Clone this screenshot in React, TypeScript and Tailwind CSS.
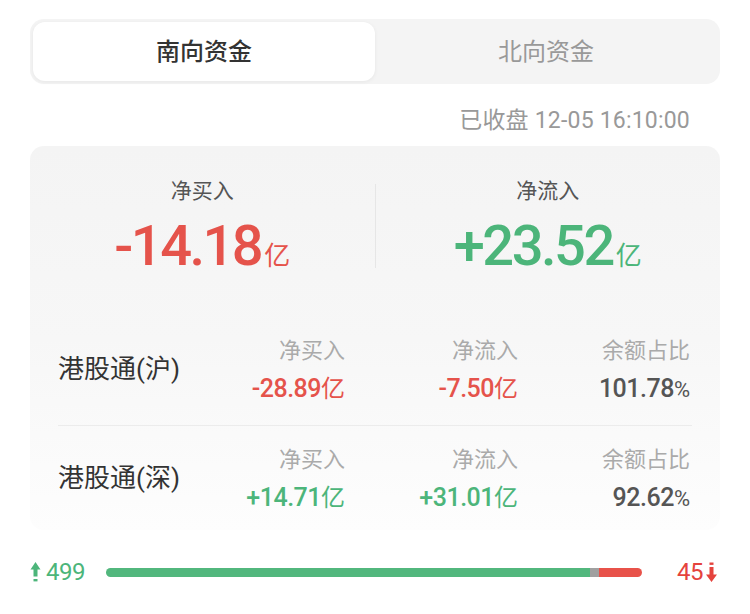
import React, { useState } from 'react';

const FONT = "font-['Roboto','Noto_Sans_CJK_SC',sans-serif]";

type Row = {
  name: string;
  buy: string;
  flow: string;
  ratio: string;
  up: boolean;
};

const rows: Row[] = [
  { name: '港股通(沪)', buy: '-28.89', flow: '-7.50', ratio: '101.78', up: false },
  { name: '港股通(深)', buy: '+14.71', flow: '+31.01', ratio: '92.62', up: true },
];

const UpArrow = () => (
  <svg width="11" height="22" viewBox="0 0 11 22" className="shrink-0">
    <path d="M5.5 1 L10.5 8.5 H7.5 V15.5 H3.5 V8.5 H0.5 Z" fill="#4cb57a" />
    <rect x="3.5" y="18" width="4" height="2.4" fill="#4cb57a" />
  </svg>
);

const DownArrow = () => (
  <svg width="13" height="22" viewBox="0 0 13 22" className="shrink-0">
    <rect x="4.5" y="1.5" width="4" height="2.4" fill="#e5433d" />
    <path d="M6.5 21 L12 13.5 H8.5 V6 H4.5 V13.5 H1 Z" fill="#e5433d" />
  </svg>
);

const App = () => {
  const [tab, setTab] = useState(0);

  return (
    <div className={`w-[750px] h-[614px] bg-white ${FONT} overflow-hidden`}>
      {/* Tabs */}
      <div className="mx-[30px] mt-[19px] h-[65px] rounded-[14px] bg-[#f4f4f4] p-[3px] flex">
        {['南向资金', '北向资金'].map((t, i) => (
          <button
            key={t}
            onClick={() => setTab(i)}
            className={`flex-1 rounded-[12px] text-[24px] flex items-center justify-center ${
              tab === i
                ? 'bg-white text-[#333] font-medium shadow-[0_1px_4px_rgba(0,0,0,0.06)]'
                : 'text-[#999]'
            }`}
          >
            {t}
          </button>
        ))}
      </div>

      {/* Timestamp */}
      <div className="h-[62px] pt-[11px] pr-[30px] mr-[30px] flex items-center justify-end text-[23px] tracking-[0.2px] text-[#999] leading-none">
        已收盘 12-05 16:10:00
      </div>

      {/* Card */}
      <div className="mx-[30px] h-[384px] rounded-[14px] bg-gradient-to-b from-[#f4f4f4] via-[#f7f7f7] to-[#fdfdfd]">
        {/* Summary */}
        <div className="h-[167px] flex items-start pt-[32px]">
          <div className="flex-1 flex flex-col items-center">
            <div className="text-[21px] text-[#555] leading-none h-[26px] flex items-center">净买入</div>
            <div className="mt-[14px] flex items-baseline text-[#e5534b] leading-none">
              <span className="text-[56px] font-medium tracking-[-2.5px]">-14.18</span>
              <span className="text-[26px] ml-[3px]">亿</span>
            </div>
          </div>
          <div className="w-px h-[84px] mt-[6px] bg-[#e6e6e6]" />
          <div className="flex-1 flex flex-col items-center">
            <div className="text-[21px] text-[#555] leading-none h-[26px] flex items-center">净流入</div>
            <div className="mt-[14px] flex items-baseline text-[#4cb57a] leading-none">
              <span className="text-[56px] font-medium tracking-[-2.5px]">+23.52</span>
              <span className="text-[26px] ml-[3px]">亿</span>
            </div>
          </div>
        </div>

        {/* Rows */}
        <div className="px-[28px]">
          {rows.map((r, idx) => {
            const color = r.up ? 'text-[#4cb57a]' : 'text-[#e5534b]';
            return (
              <div
                key={r.name}
                className={`grid grid-cols-[1fr_150px_173px_172px] items-center ${
                  idx === 0 ? 'border-b border-[#ececec] h-[113px]' : 'h-[104px]'
                }`}
              >
                <div className="text-[26px] text-[#333] leading-none">{r.name}</div>
                {[
                  { h: '净买入', v: r.buy, c: color, u: '亿' },
                  { h: '净流入', v: r.flow, c: color, u: '亿' },
                  { h: '余额占比', v: r.ratio, c: 'text-[#555]', u: '%' },
                ].map((col) => (
                  <div key={col.h} className="flex flex-col items-end pr-[2px]">
                    <div className="text-[22px] text-[#aaa] leading-none h-[26px] flex items-center">{col.h}</div>
                    <div className={`mt-[12px] flex items-baseline leading-none ${col.c}`}>
                      <span className="text-[25px] font-medium tracking-[-0.5px]">{col.v}</span>
                      <span className={col.u === '%' ? 'text-[22px]' : 'text-[24px]'}>{col.u}</span>
                    </div>
                  </div>
                ))}
              </div>
            );
          })}
        </div>
      </div>

      {/* Rise / fall bar */}
      <div className="mt-[27px] h-[30px] px-[30px] flex items-center">
        <UpArrow />
        <span className="ml-[5px] text-[24px] tracking-[-0.5px] text-[#4cb57a] leading-none">499</span>
        <div className="ml-[21px] flex-1 h-[9px] rounded-full overflow-hidden flex">
          <div className="bg-[#52b77d]" style={{ width: `${(489 / 542) * 100}%` }} />
          <div className="bg-[#a0a0a0]" style={{ width: `${(10 / 542) * 100}%` }} />
          <div className="flex-1 bg-[#e8524a]" />
        </div>
        <span className="ml-[35px] text-[24px] tracking-[-0.5px] text-[#e5433d] leading-none">45</span>
        <span className="ml-[2px] flex">
          <DownArrow />
        </span>
        <div className="w-[2px]" />
      </div>
    </div>
  );
};

export default App;
